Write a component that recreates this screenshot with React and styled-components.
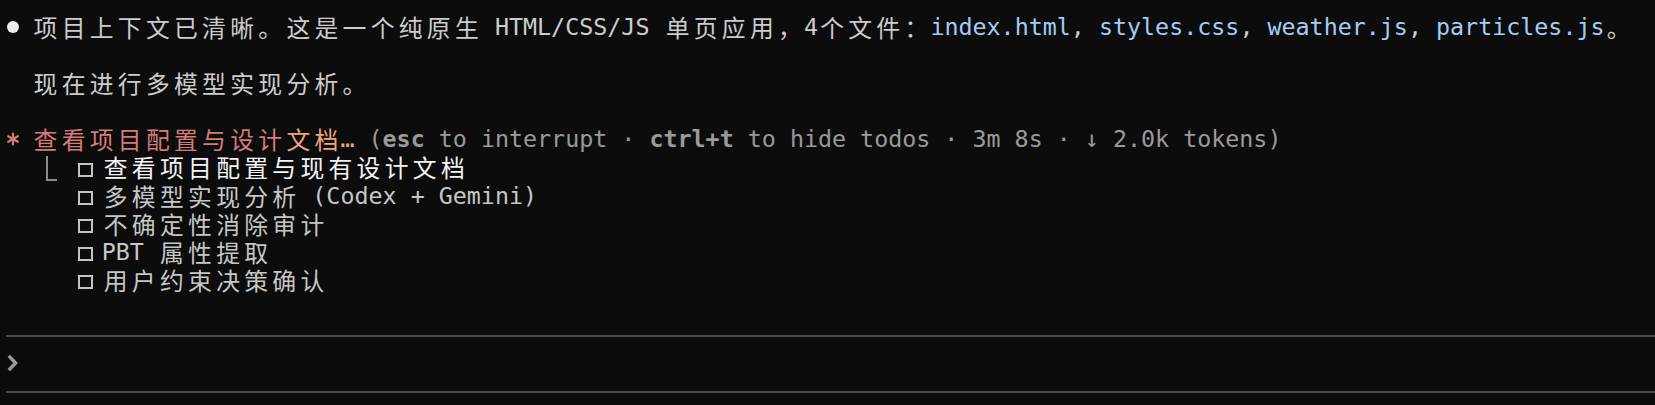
import React from 'react';
import styled, { createGlobalStyle } from 'styled-components';

const CELL = 14.05;
const ROW = 28.1;

const Global = createGlobalStyle`
  html, body { margin: 0; padding: 0; background: #0c0c0c; }
  body { width: 1655px; height: 405px; overflow: hidden; }
`;

const Screen = styled.div`
  box-sizing: border-box;
  width: 1655px;
  height: 405px;
  overflow: hidden;
  background: #0c0c0c;
  padding: 13px 0 0 3.3px;
  font-family: "DejaVu Sans Mono", monospace;
  font-size: 23.34px;
  line-height: ${ROW}px;
  color: #cccccc;
  white-space: pre;
`;

const Row = styled.div`
  height: ${ROW}px;
  overflow: visible;
`;

const RuleRow = styled.div`
  height: ${ROW}px;
  display: flex;
  align-items: center;
`;

const Rule = styled.div`
  flex: 1;
  height: 2px;
  margin-left: 2.7px;
  background: #4b4b4b;
`;

const Seg = styled.span`
  color: ${(p) => p.$c || 'inherit'};
  font-weight: ${(p) => (p.$b ? 700 : 400)};
`;

const Wide = styled.span`
  display: inline-block;
  width: ${2 * CELL}px;
  height: ${ROW}px;
  vertical-align: top;
  text-align: center;
  font-family: "Noto Sans CJK SC", sans-serif;
  font-size: 23.8px;
`;

const Cell = styled.span`
  display: inline-flex;
  width: ${(p) => (p.$w || 1) * CELL}px;
  height: ${ROW}px;
  vertical-align: top;
  align-items: center;
  overflow: visible;
`;

const Dot = styled.span`
  flex-shrink: 0;
  width: 12.5px;
  height: 12.5px;
  margin-left: 3.5px;
  border-radius: 50%;
  background: #ececec;
`;

const Elbow = styled.span`
  flex-shrink: 0;
  align-self: flex-start;
  box-sizing: border-box;
  width: 11.5px;
  height: 25px;
  margin-top: 3px;
  margin-left: 0.5px;
  border-left: 2px solid #8c8c8c;
  border-bottom: 2px solid #8c8c8c;
`;

const Box = styled.span`
  flex-shrink: 0;
  box-sizing: border-box;
  width: 15px;
  height: 14px;
  margin-left: 4.5px;
  margin-top: 4px;
  border: 2px solid #c4c4c4;
`;

const Star = styled.svg`
  flex-shrink: 0;
  margin-left: 3.7px;
  width: 12px;
  height: 12px;
  overflow: visible;
`;

const Chevron = styled.svg`
  flex-shrink: 0;
  margin-left: 3.5px;
  margin-top: -2px;
  width: 11px;
  height: 18px;
`;

function split(s) {
  const out = [];
  let buf = '';
  let k = 0;
  for (const ch of s) {
    const c = ch.codePointAt(0);
    if (c >= 0x2e80) {
      if (buf) { out.push(buf); buf = ''; }
      out.push(<Wide key={k++}>{ch}</Wide>);
    } else {
      buf += ch;
    }
  }
  if (buf) out.push(buf);
  return out;
}

const T = ({ c, b, children }) => (
  <Seg $c={c} $b={b}>{split(children)}</Seg>
);

const BLUE = '#a3cdf7';
const GRAY = '#9a9a9a';
const ROSE = '#d47c79';
const PEACH = '#f2a47b';

const todos = [
  { text: '查看项目配置与现有设计文档', active: true },
  { text: '多模型实现分析 (Codex + Gemini)' },
  { text: '不确定性消除审计' },
  { text: 'PBT 属性提取' },
  { text: '用户约束决策确认' },
];

export default function App() {
  return (
    <>
      <Global />
      <Screen>
        <Row>
          <Cell><Dot /></Cell>
          <T>{' 项目上下文已清晰。这是一个纯原生 HTML/CSS/JS 单页应用，4个文件：'}</T>
          <T c={BLUE}>index.html</T>
          <T>{', '}</T>
          <T c={BLUE}>styles.css</T>
          <T>{', '}</T>
          <T c={BLUE}>weather.js</T>
          <T>{', '}</T>
          <T c={BLUE}>particles.js</T>
          <T>。</T>
        </Row>
        <Row />
        <Row>
          <T>{'  现在进行多模型实现分析。'}</T>
        </Row>
        <Row />
        <Row>
          <Cell>
            <Star viewBox="0 0 12 12">
              <g stroke={ROSE} strokeWidth="2.2" strokeLinecap="round">
                <line x1="6" y1="0.5" x2="6" y2="11.5" />
                <line x1="1.2" y1="3.2" x2="10.8" y2="8.8" />
                <line x1="1.2" y1="8.8" x2="10.8" y2="3.2" />
              </g>
            </Star>
          </Cell>
          <T>{' '}</T>
          <T c={ROSE}>查看项目配置与设计</T>
          <T c={PEACH}>文档…</T>
          <T c={GRAY}>{' ('}</T>
          <T c={GRAY} b>esc</T>
          <T c={GRAY}>{' to interrupt · '}</T>
          <T c={GRAY} b>ctrl+t</T>
          <T c={GRAY}>{' to hide todos · 3m 8s · ↓ 2.0k tokens)'}</T>
        </Row>
        {todos.map((t, i) => (
          <Row key={i}>
            <T>{'   '}</T>
            <Cell>{i === 0 ? <Elbow /> : null}</Cell>
            <T>{' '}</T>
            <Cell $w={2}><Box /></Cell>
            <T c={t.active ? '#f4f4f4' : '#c6c6c6'}>{t.text}</T>
          </Row>
        ))}
        <Row />
        <RuleRow><Rule /></RuleRow>
        <Row>
          <Cell>
            <Chevron viewBox="0 0 11 18">
              <polyline points="1.8,1.8 8.6,9 1.8,16.2" fill="none" stroke="#9a9a9a" strokeWidth="3.4" />
            </Chevron>
          </Cell>
        </Row>
        <RuleRow><Rule /></RuleRow>
      </Screen>
    </>
  );
}
